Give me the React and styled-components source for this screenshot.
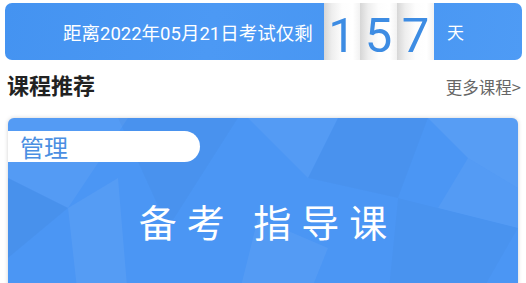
import React from "react";
import styled, { createGlobalStyle } from "styled-components";

const Global = createGlobalStyle`
  html, body { margin: 0; padding: 0; background: #fff; }
  body { font-family: Roboto, "Noto Sans CJK SC", sans-serif; }
  * { box-sizing: border-box; }
`;

const Page = styled.div`
  width: 526px;
  height: 283px;
  overflow: hidden;
  padding: 3px 0 0;
`;

const Banner = styled.div`
  margin: 0 4px 0 5px;
  height: 57px;
  border-radius: 7px;
  display: flex;
  align-items: stretch;
  background: linear-gradient(100deg, #4493f1 0%, #4c99f4 40%, #4896f2 70%, #4e9bf5 100%);
`;

const Label = styled.div`
  flex: 0 0 319px;
  display: flex;
  align-items: center;
  padding-left: 58px;
  color: #fff;
  font-size: 18.5px;
  font-family: Roboto, "Noto Sans CJK SC", sans-serif;
  white-space: nowrap;
`;

const Digits = styled.div`
  flex: 0 0 110px;
  display: grid;
  grid-template-columns: 36px 37px 37px;
`;

const Digit = styled.div`
  display: flex;
  justify-content: center;
  padding-top: 13px;
  font-family: Roboto, sans-serif;
  font-size: 49px;
  line-height: 40px;
  color: #3d8ce3;
  background: linear-gradient(90deg, #d6d6d6 0%, #eeeeee 22%, #fdfdfd 50%, #ffffff 80%, #f2f2f2 100%);
`;

const Unit = styled.div`
  display: flex;
  align-items: center;
  padding-left: 13px;
  color: #fff;
  font-size: 17px;
  font-family: "Noto Sans CJK SC", sans-serif;
`;

const SectionHead = styled.div`
  display: flex;
  justify-content: space-between;
  align-items: center;
  padding: 4px 5px 0 7px;
  height: 50px;
`;

const SectionTitle = styled.div`
  font-family: "Noto Sans CJK SC", sans-serif;
  font-weight: 700;
  font-size: 22px;
  color: #222;
  margin-top: -6px;
`;

const More = styled.div`
  font-family: "Noto Sans CJK SC", sans-serif;
  font-size: 16.5px;
  color: #666;
`;

const Card = styled.div`
  position: relative;
  margin: 8px 8px 0 8px;
  height: 180px;
  border-radius: 6px;
  overflow: hidden;
  background: #4b96f4;
  box-shadow: 0 0 4px rgba(0, 0, 0, 0.18);
`;

const Facets = styled.svg`
  position: absolute;
  inset: 0;
  width: 100%;
  height: 100%;
`;

const CardBody = styled.div`
  position: relative;
  display: flex;
  flex-direction: column;
  align-items: flex-start;
  padding-top: 13px;
`;

const Tag = styled.div`
  width: 192px;
  height: 31px;
  border-radius: 0 16px 16px 0;
  background: #fff;
  padding-left: 12px;
  display: flex;
  align-items: center;
  font-family: "Noto Sans CJK SC", sans-serif;
  font-size: 24px;
  color: #4b8fe2;
`;

const CardTitle = styled.div`
  align-self: center;
  margin-top: 31px;
  font-family: "Noto Sans CJK SC", sans-serif;
  font-size: 38px;
  letter-spacing: 10px;
  color: #fff;
  padding-left: 10px;
  line-height: 56px;
`;

export default function App() {
  return (
    <>
      <Global />
      <Page>
        <Banner>
          <Label>距离2022年05月21日考试仅剩</Label>
          <Digits>
            {["1", "5", "7"].map((d, i) => (
              <Digit key={i}>{d}</Digit>
            ))}
          </Digits>
          <Unit>天</Unit>
        </Banner>
        <SectionHead>
          <SectionTitle>课程推荐</SectionTitle>
          <More>更多课程&gt;</More>
        </SectionHead>
        <Card>
          <Facets viewBox="0 0 510 180" preserveAspectRatio="none">
            <polygon points="0,0 120,0 60,90 0,60" fill="#ffffff" opacity="0.05" />
            <polygon points="0,60 60,90 0,140" fill="#000" opacity="0.03" />
            <polygon points="60,90 110,60 120,180 70,180" fill="#ffffff" opacity="0.06" />
            <polygon points="110,0 230,0 160,110" fill="#000" opacity="0.025" />
            <polygon points="240,0 330,0 300,60" fill="#ffffff" opacity="0.05" />
            <polygon points="330,0 420,0 390,80 300,60" fill="#000" opacity="0.025" />
            <polygon points="420,0 510,0 510,70 460,40" fill="#ffffff" opacity="0.07" />
            <polygon points="460,40 510,70 510,110 430,90" fill="#ffffff" opacity="0.05" />
            <polygon points="390,80 430,90 510,110 470,180 380,180" fill="#000" opacity="0.02" />
            <polygon points="250,100 320,130 300,180 230,180" fill="#ffffff" opacity="0.05" />
          </Facets>
          <CardBody>
            <Tag>管理</Tag>
            <CardTitle>备考 指导课</CardTitle>
          </CardBody>
        </Card>
      </Page>
    </>
  );
}
